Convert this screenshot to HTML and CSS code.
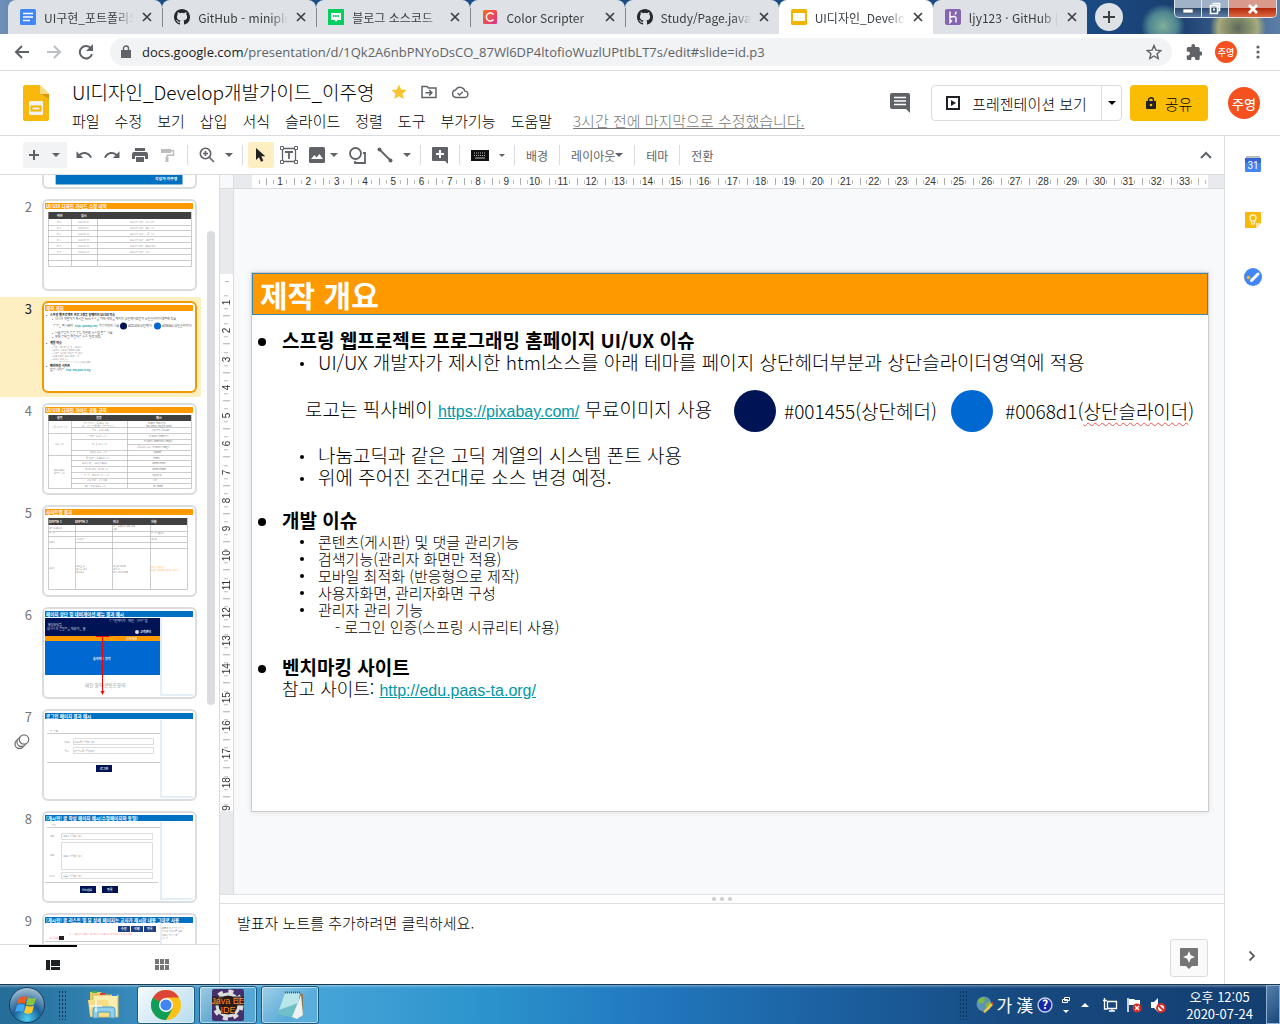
FILE: index.html
```html
<!DOCTYPE html>
<html lang="ko">
<head>
<meta charset="utf-8">
<title>UI디자인_Develop개발가이드_이주영 - Google Slides</title>
<link rel="stylesheet" href="styles.css">
</head>
<body>
<svg class="defs" aria-hidden="true">
  <symbol id="i-github" viewBox="0 0 16 16"><path fill="#24292e" d="M8 0C3.58 0 0 3.58 0 8c0 3.54 2.29 6.53 5.47 7.59.4.07.55-.17.55-.38v-1.49c-2.01.37-2.53-.49-2.69-.94-.09-.23-.48-.94-.82-1.13-.28-.15-.68-.52-.01-.53.63-.01 1.08.58 1.23.82.72 1.21 1.87.87 2.33.66.07-.52.28-.87.51-1.07-1.78-.2-3.64-.89-3.64-3.95 0-.87.31-1.59.82-2.15-.08-.2-.36-1.02.08-2.12 0 0 .67-.21 2.2.82a7.6 7.6 0 0 1 4 0c1.53-1.04 2.2-.82 2.2-.82.44 1.1.16 1.92.08 2.12.51.56.82 1.27.82 2.15 0 3.07-1.87 3.75-3.65 3.95.29.25.54.73.54 1.48v2.2c0 .21.15.46.55.38A8 8 0 0 0 16 8c0-4.42-3.58-8-8-8z"/></symbol>
  <symbol id="i-x" viewBox="0 0 10 10"><path d="M1 1l8 8M9 1l-8 8" stroke="#3c4043" stroke-width="1.7"/></symbol>
  <symbol id="i-caret" viewBox="0 0 8 4"><path d="M0 0h8l-4 4z" fill="currentColor"/></symbol>
  <symbol id="i-undo" viewBox="0 0 24 24"><path fill="#5f6368" d="M12.5 8c-2.65 0-5.05.99-6.9 2.6L2 7v9h9l-3.62-3.62c1.39-1.16 3.16-1.88 5.12-1.88 3.54 0 6.55 2.31 7.6 5.5l2.37-.78C21.08 11.03 17.15 8 12.5 8z"/></symbol>
</svg>

<header class="tabstrip">
  <nav class="tabs" aria-label="탭">
    <a class="tab" href="#"><svg width="16" height="16"><rect width="16" height="16" rx="1.5" fill="#4285f4"/><path d="M3 4.500h10M3 8h10M3 11.500h7" stroke="#fff" stroke-width="1.700"/></svg><span>UI구현_포트폴리오</span><svg class="x"><use href="#i-x"/></svg></a>
    <a class="tab sep" href="#"><svg width="16" height="16"><use href="#i-github"/></svg><span>GitHub - miniplugin</span><svg class="x"><use href="#i-x"/></svg></a>
    <a class="tab sep" href="#"><svg width="16" height="16"><rect width="16" height="16" fill="#04cf5c"/><path d="M3 4h10v7H9.500L8 13l-1.500-2H3z" fill="#fff"/><path d="M5 7h6" stroke="#04cf5c" stroke-width="2" stroke-dasharray="1.500 .7"/></svg><span>블로그 소스코드</span><svg class="x"><use href="#i-x"/></svg></a>
    <a class="tab sep" href="#"><svg width="16" height="16"><defs><linearGradient id="gc" x2="1" y2="1"><stop stop-color="#ff6b1a"/><stop offset="1" stop-color="#d8308c"/></linearGradient></defs><rect x="1" y="1" width="14" height="14" rx="1.500" fill="url(#gc)"/><path d="M11.500 5.500a4 4 0 1 0 0 5" fill="none" stroke="#fff" stroke-width="1.500"/></svg><span>Color Scripter</span><svg class="x"><use href="#i-x"/></svg></a>
    <a class="tab sep" href="#"><svg width="16" height="16"><use href="#i-github"/></svg><span>Study/Page.java a</span><svg class="x"><use href="#i-x"/></svg></a>
    <a class="tab active" href="#"><svg width="16" height="16"><rect width="16" height="16" rx="1.500" fill="#f4b400"/><path fill="#fff" d="M2 4h12v8H2z"/></svg><span>UI디자인_Develop</span><svg class="x"><use href="#i-x"/></svg></a>
    <a class="tab" href="#"><svg width="16" height="16"><rect width="16" height="16" rx="2" fill="#8565b0"/><path d="M5 2.500v6c3-1.500 6-1.500 6 .5v4.500M11 2.500q0 2-1 3M5 10.500v3l1.500-1.500z" fill="none" stroke="#fff" stroke-width="1.400"/></svg><span>ljy123 · GitHub |</span><svg class="x"><use href="#i-x"/></svg></a>
  </nav>
  <button class="newtab" aria-label="새 탭"><svg width="14" height="14"><path d="M7 1v12M1 7h12" stroke="#3c4043" stroke-width="2"/></svg></button>
  <div class="winbtns">
    <button aria-label="최소화"><svg width="12" height="16"><rect x="1" y="8" width="10" height="4" fill="#fff" stroke="#555" stroke-width=".7"/></svg></button>
    <button aria-label="이전 크기로"><svg width="14" height="16"><path d="M4.500 2.500h7v7h-2M2.500 4.500h7v8h-7z" fill="none" stroke="#fff" stroke-width="1.600"/><path d="M5 7.500h2v2H5z" fill="#fff"/></svg></button>
    <button class="wclose" aria-label="닫기"><svg width="12" height="16"><path d="M2 4l8 8M10 4l-8 8" stroke="#fff" stroke-width="2.800"/></svg></button>
  </div>
</header>

<div class="addressbar">
  <button aria-label="뒤로"><svg width="16" height="16"><path d="M15 8H2M8 2L2 8l6 6" fill="none" stroke="#5f6368" stroke-width="2"/></svg></button>
  <button aria-label="앞으로"><svg width="16" height="16"><path d="M1 8h13M8 2l6 6-6 6" fill="none" stroke="#bdc1c6" stroke-width="2"/></svg></button>
  <button aria-label="새로고침"><svg width="16" height="16"><path d="M13 4.500A6.200 6.200 0 1 0 14 10" fill="none" stroke="#5f6368" stroke-width="2"/><path d="M15 0v7H8z" fill="#5f6368"/></svg></button>
  <div class="omnibox">
    <svg width="10" height="14"><path d="M0 5h10v8H0z" fill="#5f6368"/><path d="M2.500 5V3.500a2.500 2.500 0 0 1 5 0V5" fill="none" stroke="#5f6368" stroke-width="1.400"/></svg>
    <span class="url"><b>docs.google.com</b>/presentation/d/1Qk2A6nbPNYoDsCO_87Wl6DP4ltofioWuzlUPtIbLT7s/edit#slide=id.p3</span>
    <svg width="16" height="16"><path d="M8 1.500l1.900 4.600 4.900.4-3.700 3.200 1.100 4.800L8 12l-4.200 2.500 1.100-4.800L1.200 6.500l4.900-.4z" fill="none" stroke="#5f6368" stroke-width="1.400"/></svg>
  </div>
  <svg class="puzzle" width="16" height="16" viewBox="1 1 21 21"><path fill="#5f6368" d="M20.500 11H19V7a2 2 0 0 0-2-2h-4V3.500a2.500 2.500 0 0 0-5 0V5H4a2 2 0 0 0-2 2v3.800h1.500a2.700 2.700 0 0 1 0 5.400H2V20c0 1.100.9 2 2 2h3.800v-1.500a2.700 2.700 0 0 1 5.400 0V22H17a2 2 0 0 0 2-2v-4h1.500a2.500 2.500 0 0 0 0-5z"/></svg>
  <span class="avatar small">주영</span>
  <svg class="dots" width="4" height="16"><circle cx="2" cy="3" r="1.600"/><circle cx="2" cy="8" r="1.600"/><circle cx="2" cy="13" r="1.600"/></svg>
</div>

<div class="dochead">
  <svg class="logo" width="26" height="36"><path d="M2 0h15l9 9v25q0 2-2 2H2q-2 0-2-2V2Q0 0 2 0z" fill="#f8b90c"/><path d="M17 0l9 9h-9z" fill="#fbdc85"/><path d="M18 9h8v5z" fill="#d99a0a"/><path d="M6 17q0-1 1-1h12q1 0 1 1v12q0 1-1 1H7q-1 0-1-1z" fill="#f1f1f1"/><path d="M8.500 21.500h9v4h-9z" fill="none" stroke="#f4b400" stroke-width="2"/></svg>
  <div class="headmain">
    <div class="titlerow">
      <h1>UI디자인_Develop개발가이드_이주영</h1>
      <svg width="16" height="16"><path fill="#fbc32c" d="M8 .5l2.200 5.100 5.500.5-4.200 3.600 1.300 5.400L8 12.200l-4.800 2.900 1.300-5.400L.3 6.100l5.500-.5z"/></svg>
      <svg width="16" height="16"><path d="M1 2.500h5l1.500 1.500H15v9.500H1z" fill="none" stroke="#5f6368" stroke-width="1.500"/><path d="M4.500 8.700h6M8.200 6l2.700 2.700-2.700 2.700" fill="none" stroke="#5f6368" stroke-width="1.500"/></svg>
      <svg width="18" height="16"><path d="M5 13.500h8.500a3.200 3.200 0 0 0 .4-6.400A5 5 0 0 0 4.600 6 3.800 3.800 0 0 0 5 13.500z" fill="none" stroke="#5f6368" stroke-width="1.400"/><path d="M6.500 9l2 2 3.300-3.300" fill="none" stroke="#5f6368" stroke-width="1.300"/></svg>
    </div>
    <nav class="menus">
      <button>파일</button><button>수정</button><button>보기</button><button>삽입</button><button>서식</button><button>슬라이드</button><button>정렬</button><button>도구</button><button>부가기능</button><button>도움말</button>
      <a href="#">3시간 전에 마지막으로 수정했습니다.</a>
    </nav>
  </div>
  <button class="comment" aria-label="댓글"><svg width="20" height="20"><path d="M2 0h16q2 0 2 2v18l-4-4H2q-2 0-2-2V2q0-2 2-2z" fill="#5f6368"/><path d="M4 4.500h12M4 8h12M4 11.500h12" stroke="#fff" stroke-width="1.600"/></svg></button>
  <div class="present">
    <button><svg width="14" height="14"><path d="M1 1h12v12H1z" fill="none" stroke="#202124" stroke-width="2"/><path d="M5 4l5 3-5 3z" fill="#202124"/></svg>프레젠테이션 보기</button>
    <button class="more" aria-label="프레젠테이션 옵션"><svg width="8" height="4"><use href="#i-caret"/></svg></button>
  </div>
  <button class="share"><svg width="10" height="12"><path d="M0 4h10v7q0 1-1 1H1q-1 0-1-1z" fill="#202124"/><path d="M2.500 4.500V3.300a2.500 2.500 0 0 1 5 0v1.200" fill="none" stroke="#202124" stroke-width="1.400"/><circle cx="5" cy="8" r="1.300" fill="#fbbc04"/></svg>공유</button>
  <span class="avatar">주영</span>
</div>

<div class="app">
  <div class="work">
    <div class="toolbar">
      <div class="newslide"><button aria-label="새 슬라이드"><svg width="12" height="12"><path d="M6 1v10M1 6h10" stroke="#5f6368" stroke-width="2"/></svg></button><button aria-label="레이아웃 선택"><svg width="8" height="4"><use href="#i-caret"/></svg></button></div>
      <button class="ic" aria-label="실행취소"><svg width="18" height="18"><use href="#i-undo"/></svg></button>
      <button class="ic flip" aria-label="재실행"><svg width="18" height="18"><use href="#i-undo"/></svg></button>
      <button class="ic" aria-label="인쇄"><svg width="16" height="14"><path d="M3 0h10v3H3zM2 4h12q2 0 2 2v5h-3V8H3v3H0V6q0-2 2-2zM4 9h8v5H4z" fill="#5f6368"/></svg></button>
      <button class="ic" aria-label="서식 복사"><svg width="14" height="14"><path d="M0 1h10v4H0z" fill="#bdbdbd"/><path d="M10 2.700h2.500v4.600H6v2" fill="none" stroke="#bdbdbd" stroke-width="1.400"/><path d="M4.500 9h3v5h-3z" fill="#bdbdbd"/></svg></button>
      <i class="bar"></i>
      <button class="ic wide" aria-label="확대/축소"><svg width="16" height="16"><circle cx="6.500" cy="6.500" r="5.200" fill="none" stroke="#5f6368" stroke-width="1.600"/><path d="M10.500 10.500l4.500 4.500M4 6.500h5M6.500 4v5" stroke="#5f6368" stroke-width="1.600"/></svg><svg width="8" height="4"><use href="#i-caret"/></svg></button>
      <i class="bar"></i>
      <button class="ic picked" aria-label="선택"><svg width="12" height="16"><path d="M1 1v12l3-2.800 2 4.600 2.300-1-2-4.500h4z" fill="#202124"/></svg></button>
      <button class="ic" aria-label="텍스트 상자"><svg width="18" height="18"><path d="M2.500 2.500h13v13h-13z" fill="none" stroke="#5f6368" stroke-width="1.300"/><path d="M5 6h8M9 6v7" stroke="#5f6368" stroke-width="1.800"/><path d="M.5.500h3v3h-3zM14.500.500h3v3h-3zM.5 14.500h3v3h-3zM14.500 14.500h3v3h-3z" fill="#fff" stroke="#5f6368"/></svg></button>
      <button class="ic pair" aria-label="이미지"><svg width="16" height="16"><rect width="16" height="16" rx="1.500" fill="#5f6368"/><path d="M2 12l3.500-4 2 2.500L10.500 7l3.500 5z" fill="#fff"/></svg><svg width="8" height="4"><use href="#i-caret"/></svg></button>
      <button class="ic" aria-label="도형"><svg width="17" height="17"><circle cx="6.500" cy="6.500" r="5.500" fill="none" stroke="#5f6368" stroke-width="1.800"/><path d="M14 6h2v10H6v-2" fill="none" stroke="#5f6368" stroke-width="1.800"/></svg></button>
      <button class="ic wide" aria-label="선"><svg width="16" height="16"><path d="M2.500 2.500l11 11" stroke="#5f6368" stroke-width="1.800"/><circle cx="2.500" cy="2.500" r="2" fill="#5f6368"/><circle cx="13.500" cy="13.500" r="2" fill="#5f6368"/></svg><svg width="8" height="4"><use href="#i-caret"/></svg></button>
      <i class="bar"></i>
      <button class="ic" aria-label="댓글 추가"><svg width="16" height="17"><path d="M1 0h14q1 0 1 1v16l-3-3H1q-1 0-1-1V1q0-1 1-1z" fill="#5f6368"/><path d="M8 3v8M4 7h8" stroke="#fff" stroke-width="2"/></svg></button>
      <i class="bar"></i>
      <button class="ic wide" aria-label="입력 도구"><svg width="18" height="12"><rect y="1" width="18" height="11" fill="#111"/><path d="M3 4h12M3 6.500h12" stroke="#bbb" stroke-dasharray="1 1"/><path d="M4 9h10" stroke="#bbb"/></svg><svg width="6" height="3"><use href="#i-caret"/></svg></button>
      <i class="bar"></i>
      <button class="tx">배경</button><i class="bar"></i>
      <button class="tx">레이아웃<svg width="8" height="4"><use href="#i-caret"/></svg></button><i class="bar"></i>
      <button class="tx">테마</button><i class="bar"></i>
      <button class="tx">전환</button>
      <button class="ic collapse" aria-label="메뉴 숨기기"><svg width="12" height="8"><path d="M1 7l5-5 5 5" fill="none" stroke="#5f6368" stroke-width="2"/></svg></button>
    </div>

    <div class="panes">
      <aside class="film">
        <div class="filmview">
        <ol>
          <li class="cut"><span></span><svg viewBox="0 74 151 14"><path fill="#0070c0" d="M1 70h148v15H1z"/><text x="117" y="80" class="t w b">작성자 이주영</text></svg></li>
          <li><span>2</span><svg viewBox="0 0 151 88"><path class="or" d="M1 2h148v6H1z"/><text class="t w b" x="2" y="7">UI/UIX 디자인 가이드 수정 내역</text><path fill="#404040" d="M4 11h143v7H4z"/><text class="s w b" x="13" y="16">버전</text><text class="s w b" x="37" y="16">일시</text><path class="g" d="M4.500 11v54.500h143V11M4 24.500h143M4 29.500h143M4 35.500h143M4 41.500h143M4 47.500h143M4 53.500h143M4 59.500h143M27.500 18v47M53.500 18v47"/>
            <g class="m"><text x="13" y="22">v1.0</text><text x="34" y="22">2020-07-01</text><text x="86" y="22">UI디자인 가이드 최초 작성</text><text x="13" y="28">v1.1</text><text x="34" y="28">2020-07-03</text><text x="86" y="28">UI디자인 가이드 헤더 추가</text><text x="13" y="34">v1.2</text><text x="34" y="34">2020-07-10</text><text x="86" y="34">UI디자인 가이드 공통 추가</text><text x="13" y="40">v1.3</text><text x="34" y="40">2020-07-14</text><text x="86" y="40">UI디자인 가이드 사이트맵</text><text x="13" y="46">v1.4</text><text x="34" y="46">2020-07-20</text><text x="86" y="46">UI디자인 가이드 페이지 예시</text><text x="13" y="52">v1.5</text><text x="34" y="52">2020-07-24</text><text x="86" y="52">UI디자인 가이드 최종</text></g></svg></li>
          <li class="sel"><span>3</span><svg viewBox="0 0 151 88"><path class="or" d="M1 2h148v6H1z"/><text class="t w b" x="2" y="7">제작 개요</text>
            <g class="s b"><text x="2" y="13">•</text><text x="6" y="13">스프링 웹프로젝트 프로그래밍 홈페이지 UI/UX 이슈</text><text x="2" y="41">•</text><text x="6" y="41">개발 이슈</text><text x="2" y="64">•</text><text x="6" y="64">벤치마킹 사이트</text></g>
            <g class="s"><text x="8" y="17">•</text><text x="11" y="17">UI/UX 개발자가 제시한 html소스를 아래 테마를 페이지 상단헤더부분과 상단슬라이더영역에 적용</text><text x="9" y="24">로고는 픽사베이</text><text x="55" y="24">무료이미지 사용</text><text x="84" y="24">#001455(상단헤더)</text><text x="118" y="24">#0068d1(상단슬라이더)</text><text x="8" y="31">•</text><text x="11" y="31">나눔고딕과 같은 고딕 계열의 시스템 폰트 사용</text><text x="8" y="35">•</text><text x="11" y="35">위에 주어진 조건대로 소스 변경 예정.</text><text x="6" y="68">참고 사이트:</text></g>
            <g class="m"><text x="8" y="45">• 콘텐츠(게시판) 및 댓글 관리기능</text><text x="8" y="48">• 검색기능(관리자 화면만 적용)</text><text x="8" y="51">• 모바일 최적화 (반응형으로 제작)</text><text x="8" y="54">• 사용자화면, 관리자화면 구성</text><text x="8" y="57">• 관리자 관리 기능</text><text x="14" y="60">- 로그인 인증(스프링 시큐리티 사용)</text></g>
            <g class="m link b"><text x="31" y="24">https://pixabay.com/</text><text x="22" y="68">http://edu.paas-ta.org/</text></g><circle cx="79.500" cy="23" r="3.500" fill="#001455"/><circle cx="113.500" cy="23" r="3.500" fill="#0068d1"/></svg></li>
          <li><span>4</span><svg viewBox="0 0 151 88"><path class="or" d="M1 2h148v6H1z"/><text class="t w b" x="2" y="7">UI/UIX 디자인 가이드 공통 규칙</text><path fill="#404040" d="M4 10h143v6H4z"/><g class="s w b"><text x="13" y="14">항목</text><text x="52" y="14">설명</text><text x="112" y="14">예시</text></g><path class="g" d="M4.500 10v73.500h143V10M27 22.500h120M4 28.500h143M27 34.500h120M83 39.500h64M27 45.500h120M4 50.500h143M27 55.500h120M27 61.500h120M27 67.500h120M27 73.500h120M27 78.500h120M27.500 16v67M83.500 16v67"/>
            <g class="m"><text x="8" y="23">공통 디자인 규칙</text><text x="11" y="40">폴더 규칙</text><text x="10" y="66">데이터베이스</text><text x="10" y="69">파일명 규칙</text><text x="40" y="19">소스명시시 공통(헤더,푸터)</text><text x="38" y="22">UI는 기본폰트를 맑은고딕으로 표시</text><text x="48" y="26">컬러는 2가지 사용</text><text x="43" y="32">프로젝트 폴더명 규칙</text><text x="48" y="40">css, js 폴더 규칙</text><text x="46" y="48">이미지 폴더 - 규칙</text><text x="42" y="54">웹 사이트 - 홈페이지 규칙</text><text x="38" y="59">관리자 메뉴 - 관리자 페이지</text><text x="41" y="65">게시판 관리 - 게시판 규칙</text><text x="40" y="71">로그인 - 회원가입 기능 규칙</text><text x="43" y="76">기타 컨텐츠 규칙 적용</text><text x="41" y="82">DB 스키마 테이블 규칙</text><text x="104" y="19">header, footer.jsp</text><text x="102" y="22">font-family: Malgun Gothic</text><text x="108" y="26">#001455, #0068d1</text><text x="105" y="32">resources/home/css</text><text x="100" y="37">resources/admin/dist/images</text><text x="92" y="43">공통이미지 폴더 : resources/images</text><text x="109" y="48">/upload/</text><text x="109" y="54">/home</text><text x="108" y="59">/admin/home</text><text x="108" y="65">/admin/board</text><text x="108" y="71">/login.jsp</text><text x="109" y="76">/etc</text><text x="109" y="82">tbl_board</text></g></svg></li>
          <li><span>5</span><svg viewBox="0 0 151 88"><path class="or" d="M1 2h148v6H1z"/><text class="t w b" x="2" y="7">사이트맵 결과</text><path fill="#404040" d="M4 11h139v7H4z"/><g class="s w b"><text x="5" y="16">DEPTH 1</text><text x="31" y="16">DEPTH 2</text><text x="69" y="16">비고</text><text x="107" y="16">현황</text></g><path class="g" d="M4.500 11v71.500h139V11M4 24.500h139M4 29.500h139M31 35.500h112M4 41.500h139M31.500 18v64M68.500 18v64M106.500 18v64"/><g class="m"><text x="5" y="22">메인(홈페이지)</text><text x="5" y="27">로그인</text><text x="5" y="36">사용자</text><text x="5" y="62">관리자</text><text x="32" y="33">공지사항</text><text x="32" y="60">관리자 홈</text><text x="32" y="63">게시물 관리</text><text x="32" y="66">회원관리</text><text x="69" y="20">기존 홈페이지 내용 사용</text><text x="69" y="23">적용</text><text x="69" y="60">게시판 CRUD</text><text x="69" y="63">검색 기능</text><text x="69" y="66">회원 관리 CRUD</text><text x="107" y="27">로그인 페이지</text><text x="107" y="33">게시판</text></g><g class="m orange"><text x="107" y="61">관리자 페이지</text><text x="107" y="64">http://localhost:8080/ 관리자</text></g></svg></li>
          <li><span>6</span><svg viewBox="0 0 151 88"><path class="bl" d="M1 2h148v6H1z"/><text class="t w b" x="2" y="7">페이지 상단 및 네비게이션 메뉴 결과 예시</text><path fill="#001455" d="M1 9h115v18H1z"/><path class="or" d="M1 27h115v5H1z"/><path fill="#0068d1" d="M1 32h115v34H1z"/><path class="pale" d="M117 9v77h32"/><g class="s w"><text x="4" y="17">홍길동닷컴</text><text x="3" y="21">회사소개 콘텐츠를 제공하는 홈</text><text x="65" y="13">로그인페이지 - 메인 - 사이트맵</text></g><g class="s w b"><text x="96" y="24">고객센터</text><text x="82" y="31">공지사항</text><text x="49" y="51">슬라이드 영역</text></g><circle cx="93" cy="23" r="2" fill="#ddd"/><text class="t" x="41" y="78" fill="#777">메인 영역(콘텐츠영역)</text><path d="M52 27.500h13M58.500 27v57" stroke="red" /><path d="M56.500 82h4l-2 4z" fill="red"/></svg></li>
          <li><span>7<svg class="anim" width="16" height="16" viewBox="0 0 16 16"><g fill="#fff" stroke="#757575" stroke-width="1.300"><circle cx="5.500" cy="10" r="4.500"/><circle cx="7.500" cy="8" r="4.500"/><circle cx="10" cy="5.500" r="4.700"/></g></svg></span><svg viewBox="0 0 151 88"><path class="bl" d="M1 2h148v6H1z"/><text class="t w b" x="2" y="7">로그인 페이지 결과 예시</text><path class="pale" d="M117 9v77h32"/><path d="M3 22.500h113M3 51.500h113" class="g"/><path class="fld" d="M29.500 27.500h80v6h-80zM29.500 36.500h80v6h-80z"/><g class="m"><text x="6" y="21">로그인폼</text><text x="20" y="32">아이디</text><text x="21" y="41">암호</text><text x="30" y="32">아이디를 입력해주세요</text><text x="30" y="41">비밀번호를 입력하세요</text></g><path fill="#001455" d="M52 54h16v7H52z"/><text class="s w b" x="56" y="59">로그인</text></svg></li>
          <li><span>8</span><svg viewBox="0 0 151 88"><path class="bl" d="M1 2h148v6H1z"/><text class="t w b" x="2" y="7">[게시판] 글 작성 페이지 예시(수정페이지와 동일)</text><path class="pale" d="M117 9v77h32"/><path d="M3 14.500h113M1 69.500h113" class="g"/><path class="fld" d="M17.500 20.500h91v6h-91zM17.500 29.500h91v27h-91zM17.500 59.500h91v6h-91z"/><g class="m"><text x="6" y="13">글쓰기</text><text x="6" y="24">제목</text><text x="6" y="43">내용</text><text x="5" y="64">작성자</text><text x="19" y="24">제목을 입력해주세요</text><text x="19" y="44">내용을 입력해주세요</text><text x="19" y="64">이름을 입력해주세요</text></g><path fill="#001455" d="M36 73h16v7H36zM58 73h16v7H58z"/><text class="m w b" x="38" y="78">글쓰기완료</text><text class="s w b" x="63" y="78">목록</text></svg></li>
          <li><span>9</span><svg viewBox="0 0 151 88"><path class="bl" d="M1 2h148v6H1z"/><text class="t w b" x="2" y="7">[게시판] 글 리스트 및 뷰 상세 페이지는 교사가 제시한 내용 그대로 사용</text><path class="pale" d="M117 9v77h32"/><path d="M1 26.500h115" class="g"/><path fill="#1c3f86" d="M74 11h12v6H74zM87 11h12v6H87zM100 11h12v6h-12z"/><g class="s w b"><text x="77" y="15">수정</text><text x="90" y="15">삭제</text><text x="103" y="15">목록</text></g><g class="m"><text x="118" y="14">admin 권한으로 접속시</text><text x="118" y="17">수정과 삭제 버튼 사용</text><text x="118" y="21">사용자 권한은 목록</text><text x="118" y="24">가능함</text></g><g class="m red"><text x="25" y="20">※ 본 페이지의 내용은 게시판의 상세 페이지 예시이며 교사 제시 내용</text><text x="5" y="24">게시물제목</text></g><path d="M15 21h5v4h-5z" fill="#222"/></svg></li>
        </ol>
        <i class="scroll"></i>
        </div>
        <div class="viewtabs">
          <button class="cur" aria-label="필름 스트립 보기"><svg width="14" height="10"><path d="M0 0h4v10H0zM5 0h9v6H5zM5 7h9v3H5z" fill="#202124"/></svg></button>
          <button aria-label="바둑판 보기"><svg width="14" height="11"><path d="M0 0h4v5H0zM5 0h4v5H5zM10 0h4v5h-4zM0 6h4v5H0zM5 6h4v5H5zM10 6h4v5h-4z" fill="#757575"/></svg></button>
        </div>
      </aside>

      <main class="editor">
        <div class="hruler"><i class="corner"></i><i class="off"></i><div class="scale" id="hr"></div><i class="off end"></i></div>
        <div class="stage">
          <div class="vruler"><i class="off"></i><div class="scale" id="vr"></div><i class="off end"></i></div>
          <div class="canvas">
            <article class="slide">
              <h2>제작 개요</h2>
              <section>
                <h3>스프링 웹프로젝트 프로그래밍 홈페이지 UI/UX 이슈</h3>
                <p class="li">UI/UX 개발자가 제시한 html소스를 아래 테마를 페이지 상단헤더부분과 상단슬라이더영역에 적용</p>
                <div class="swatches">
                  <span>로고는 픽사베이 <a href="#">https://pixabay.com/</a> 무료이미지 사용</span>
                  <i class="navy"></i><span>#001455(상단헤더)</span>
                  <i class="blue"></i><span>#0068d1(<u>상단슬라이더</u>)</span>
                </div>
                <p class="li">나눔고딕과 같은 고딕 계열의 시스템 폰트 사용</p>
                <p class="li">위에 주어진 조건대로 소스 변경 예정.</p>
              </section>
              <section class="dev">
                <h3>개발 이슈</h3>
                <p class="li">콘텐츠(게시판) 및 댓글 관리기능</p>
                <p class="li">검색기능(관리자 화면만 적용)</p>
                <p class="li">모바일 최적화 (반응형으로 제작)</p>
                <p class="li">사용자화면, 관리자화면 구성</p>
                <p class="li">관리자 관리 기능</p>
                <p class="deep">- 로그인 인증(스프링 시큐리티 사용)</p>
              </section>
              <section>
                <h3>벤치마킹 사이트</h3>
                <p class="ref">참고 사이트: <a href="#">http://edu.paas-ta.org/</a></p>
              </section>
            </article>
          </div>
        </div>
        <div class="grip"><i></i><i></i><i></i></div>
        <div class="notes"><p>발표자 노트를 추가하려면 클릭하세요.</p>
          <button class="explore" aria-label="탐색"><svg width="18" height="21"><path d="M1 0h16q1 0 1 1v16q0 1-1 1h-5l-3 3-3-3H1q-1 0-1-1V1q0-1 1-1z" fill="#757575"/><path d="M9 3l1.700 4.300L15 9l-4.300 1.700L9 15l-1.700-4.300L3 9l4.300-1.700z" fill="#fff"/></svg></button>
        </div>
      </main>
    </div>
  </div>

  <aside class="side">
    <a href="#" aria-label="캘린더"><svg width="16" height="16"><path fill="#bdbdbd" d="M1 0h14v3H1z"/><path fill="#4285f4" d="M0 6h16v9q0 1-1 1H1q-1 0-1-1z"/><path fill="#3367d6" d="M0 2h16v5H0z"/><text x="8" y="13" text-anchor="middle" fill="#fff" font-size="10">31</text></svg></a>
    <a href="#" aria-label="Keep"><svg width="16" height="16"><path d="M1 0h14q1 0 1 1v10l-5 5H1q-1 0-1-1V1q0-1 1-1z" fill="#f9b80a"/><path d="M11 16v-5h5z" fill="#fde4a0"/><circle cx="8" cy="6" r="3" fill="none" stroke="#fff3cf" stroke-width="1.300"/><path d="M6.500 9v3h3V9" fill="none" stroke="#fff3cf" stroke-width="1.200"/></svg></a>
    <a href="#" aria-label="Tasks"><svg width="18" height="18"><circle cx="9" cy="9" r="9" fill="#4285f4"/><path d="M7.500 12.500l6.500-6.500" stroke="#fff" stroke-width="3" stroke-linecap="round"/><circle cx="4.500" cy="9.500" r="1.800" fill="#fbbc04"/></svg></a>
    <button aria-label="측면 패널 숨기기"><svg width="8" height="12"><path d="M1.500 1.500L6 6l-4.500 4.500" fill="none" stroke="#5f6368" stroke-width="1.800"/></svg></button>
  </aside>
</div>

<footer class="taskbar">
  <button class="orb" aria-label="시작"><svg width="38" height="38"><defs><radialGradient id="orb" cx=".5" cy=".9" r=".9"><stop stop-color="#4fd0f4"/><stop offset=".45" stop-color="#1c5f96"/><stop offset="1" stop-color="#a9c4d4"/></radialGradient></defs><circle cx="19" cy="19" r="17.500" fill="url(#orb)" stroke="#153c5c"/><path d="M11 12q4-3 8-1l-2 7q-4-2-8 0z" fill="#ee5a24"/><path d="M20 11.500q4 2 8 0l-2 7q-4 2-8 0z" fill="#8cc63f"/><path d="M9 19.500q4-2.500 8-.5l-2 7q-4-2-8 0z" fill="#3fa9f5"/><path d="M18 19.500q4 2 8 0l-2 7q-4 2.500-8 0z" fill="#fcc82c"/></svg></button>
  <i class="gripdots"></i>
  <button class="task plain" aria-label="탐색기"><svg width="34" height="34"><path d="M3 4h11l2 3h14v22H3z" fill="#e9c867"/><path d="M6 7h25v22H6z" fill="#fbeeae" stroke="#d8b757"/><path d="M5 3h5v2H5z" fill="#3cb54a"/><path d="M13 5h5v2h-5z" fill="#d6433a"/><path d="M25 6h5v2h-5z" fill="#3a84d6"/><path d="M1 12h20l2 16H3z" fill="#f6dd86"/><path d="M6 30v-8q0-3 3-3h16q3 0 3 3v8h-5v-6H11v6z" fill="#8fd0ee" stroke="#4b9cc6"/><path d="M9 12v12M3 18h12" stroke="#fff" stroke-width="1.500" opacity=".8"/></svg></button>
  <button class="task cur" aria-label="Chrome"><svg width="30" height="30" viewBox="-15 -15 30 30"><circle r="15" fill="#fbc116"/><path d="M-13-7.500A15 15 0 0 0 0 15L6.500 3.700 0 0z" fill="#0f9d58"/><path d="M-13-7.500A15 15 0 0 1 13-7.500H0v7.500z" fill="#db4437"/><circle r="7" fill="#fff"/><circle r="5.600" fill="#4285f4"/></svg></button>
  <button class="task" aria-label="Java EE IDE"><svg width="32" height="32"><rect width="32" height="32" rx="2" fill="#45306b"/><circle cx="16" cy="16" r="13.500" fill="none" stroke="#ddd" stroke-width="4" stroke-dasharray="5 5.600"/><circle cx="16" cy="16" r="11" fill="#222" stroke="#ddd" stroke-width="3"/><path d="M0 7.500h32v9H0zM9 16h14v9H9z" fill="#2a1a18" opacity=".8"/><g class="java"><text x="16" y="15">Java EE</text><text x="16" y="24">IDE</text></g></svg></button>
  <button class="task" aria-label="메모장"><svg width="32" height="30"><path d="M24 3l5 1v21l-5 3z" fill="#8a7a55"/><path d="M11 3h15l-4 25-19-4z" fill="#6fc0c8"/><path d="M11 3h15l-2 10-19 7z" fill="#b9e6ea"/><path d="M27 5l2 20-6 4-5-2z" fill="#eef1f1"/><path d="M11 2.500h15" stroke="#555" stroke-width="2" stroke-dasharray="1 1"/></svg></button>
  <div class="tray">
    <i class="gripdots"></i>
    <svg class="globe" width="18" height="18"><circle cx="8" cy="8" r="7.500" fill="#5c93b5"/><path d="M2 4q4-4 7-2l-1 5-5 1zM9 8l5-3 1 5-4 4z" fill="#7eb648"/><path d="M7 16l8-9 2 2-8 8z" fill="#f3c648"/><path d="M15 7l1-1.500 2 2-1 1.500z" fill="#d33"/></svg>
    <span class="ime">가</span><span class="ime">漢</span>
    <svg width="16" height="16"><circle cx="8" cy="8" r="7" fill="#1526a8" stroke="#c9d4ea" stroke-width="1.300"/><text x="8" y="12" text-anchor="middle" fill="#fff" font-size="12" font-weight="700">?</text></svg>
    <svg class="restore" width="10" height="20"><path d="M3.500 2.500h5v3h-5zM1.500 4.500h5v3h-5z" fill="#14406f" stroke="#fff"/><path d="M2 15h6l-3 3z" fill="#fff"/></svg>
    <svg width="8" height="4" class="up"><path d="M0 4h8L4 0z" fill="#fff"/></svg>
    <svg width="16" height="16"><path d="M5.500 4.500h9v7h-9zM7 14h6M10 11v3M2.500 1v6M1 3.500h4M2.500 7v5h3" fill="none" stroke="#fff" stroke-width="1.300"/></svg>
    <svg width="16" height="16"><path d="M2 1v14" stroke="#fff" stroke-width="1.500"/><path d="M3 2h5l1 1h5v6H9L8 8H3z" fill="#fff"/><circle cx="11" cy="11" r="4.500" fill="#d92b22"/><path d="M9 9l4 4M13 9l-4 4" stroke="#fff" stroke-width="1.300"/></svg>
    <svg width="16" height="16"><path d="M1 5h3l4-4v14l-4-4H1z" fill="#fff"/><circle cx="11" cy="11" r="4" fill="#fff" stroke="#d92b22" stroke-width="1.800"/><path d="M8.500 8.500l5 5" stroke="#d92b22" stroke-width="1.800"/></svg>
    <time>오후 12:05<br>2020-07-24</time>
    <button class="peek" aria-label="바탕 화면 보기"></button>
  </div>
</footer>
<script src="ruler.js"></script>
</body>
</html>
```
FILE: ruler.js
```js
function fillRuler(id, count) {
  const ruler = document.getElementById(id);
  for (let n = 1; n <= count; n++) {
    const cell = document.createElement('span');
    cell.textContent = n;
    ruler.appendChild(cell);
  }
}
fillRuler('hr', 33);
fillRuler('vr', 19);
```
FILE: styles.css
```css
* { box-sizing: border-box; }
body { margin: 0; min-height: 100vh; display: flex; flex-direction: column; background: #fff; color: #000; font-family: "Noto Sans CJK KR", "Noto Sans", sans-serif; font-size: 13px; font-weight: 300; }
button { font: inherit; color: inherit; background: none; border: 0; padding: 0; margin: 0; display: flex; align-items: center; justify-content: center; }
svg { display: block; flex: none; }
h1, h2, h3, p, ol { margin: 0; padding: 0; font-weight: 300; }
i { display: block; }
.defs { width: 0; height: 0; position: absolute; }

/* Browser tabs */
.tabstrip { height: 34px; display: flex; align-items: center; padding-left: 8px; background: radial-gradient(circle at 1163px 26px, #7fae9a 0, #4f8590 14px, transparent 22px), radial-gradient(circle at 1238px 28px, #5d6a58 0, #a5ab7c 20px, transparent 28px), linear-gradient(90deg, #6f8fb8 0, #1c4d85 10%, #1a4a82 85%, #1a3f70 92%, #5c7fa8 100%); }
.tabs { display: flex; flex: 0 1 1079px; height: 34px; min-width: 0; }
.tab { flex: 1 1 0; min-width: 0; display: flex; align-items: center; padding: 0 10px 0 12px; gap: 8px; background: #dee1e6; color: #3c4043; text-decoration: none; border-radius: 8px 8px 0 0; position: relative; }
.tab span { flex: 1; overflow: hidden; white-space: nowrap; font-size: 12px; font-weight: 400; mask-image: linear-gradient(90deg, #000 80%, transparent); }
.tab .x { width: 10px; height: 10px; }
.tab.sep::before { content: ""; position: absolute; left: 0; top: 8px; height: 19px; width: 1px; background: #80868b; }
.tab.active { background: #fff; }
.newtab { width: 28px; height: 28px; border-radius: 14px; background: #dee1e6; margin-left: 8px; }
.winbtns { display: flex; align-self: flex-start; margin: 0 3px 0 auto; height: 18px; border: 1px solid #dfe6ee; border-top: 0; border-radius: 0 0 5px 5px; overflow: hidden; background: linear-gradient(#9fb2c8 45%, #2b4a70 50%, #5d7da5); }
.winbtns button { width: 27px; border-right: 1px solid #dfe6ee; }
.winbtns .wclose { width: 47px; border: 0; background: linear-gradient(#d99a8c 45%, #b5290c 50%, #dd6a45); }

/* Address bar */
.addressbar { height: 37px; display: flex; align-items: center; padding: 0 20px 0 14px; border-bottom: 1px solid #dadce0; }
.addressbar > button { width: 16px; margin-right: 16px; }
.omnibox { flex: 1; height: 28px; border-radius: 14px; background: #f1f3f4; display: flex; align-items: center; padding: 0 10px 0 11px; gap: 11px; min-width: 0; margin-right: 14px; }
.url { flex: 1; color: #5f6368; font-family: "Open Sans", sans-serif; font-size: 13px; font-weight: 400; overflow: hidden; white-space: nowrap; }
.url b { font-weight: 400; color: #202124; }
.puzzle { margin-right: 13px; }
.avatar { width: 32px; height: 32px; border-radius: 50%; background: #f4511e; color: #fff; font-size: 13px; font-weight: 500; display: flex; align-items: center; justify-content: center; flex: none; }
.avatar.small { width: 22px; height: 22px; font-size: 9px; margin-right: 19px; }
.dots { fill: #5f6368; }

/* Document header */
.dochead { height: 65px; display: flex; align-items: center; padding: 0 20px 0 23px; border-bottom: 1px solid #dadce0; }
.headmain { flex: 1; padding: 6px 0 0 23px; min-width: 0; }
.titlerow { display: flex; align-items: center; height: 28px; }
.titlerow h1 { font-size: 19px; line-height: 28px; white-space: nowrap; margin-right: 17px; }
.titlerow svg { margin-right: 14px; }
.menus { display: flex; gap: 15px; height: 28px; align-items: center; font-size: 15px; white-space: nowrap; }
.menus a { color: #777; margin-left: 6px; }
.comment { margin-right: 21px; }
.present { display: flex; height: 36px; width: 191px; border: 1px solid #dadce0; border-radius: 4px; font-size: 15px; }
.present button { flex: 1; gap: 12px; white-space: nowrap; }
.present .more { flex: 0 0 20px; border-left: 1px solid #dadce0; }
.share { height: 36px; width: 78px; margin: 0 20px 0 8px; border-radius: 4px; background: #fbbc04; font-size: 15px; gap: 9px; }

/* App frame */
.app { flex: 1; display: flex; }
.work { flex: 1; min-width: 0; display: flex; flex-direction: column; }
.toolbar { height: 39px; border-bottom: 1px solid #dadce0; display: flex; align-items: center; padding: 0 12px 0 23px; color: #5f6368; }
.newslide { display: flex; width: 44px; height: 26px; background: #f1f3f4; border-radius: 2px; margin-right: 3px; }
.newslide button { flex: 1; }
.ic { width: 28px; height: 26px; }
.flip svg { transform: scaleX(-1); }
.wide { width: 44px; justify-content: space-between; padding: 0 4px 0 6px; }
.pair { width: 40px; gap: 5px; }
.picked { width: 26px; background: #feefc3; border-radius: 2px; margin-right: 1px; }
.bar { width: 1px; height: 20px; background: #dadce0; margin: 0 5px; }
.tx { font-size: 12px; font-weight: 400; padding: 0 6px; }
.collapse { margin-left: auto; width: 12px; }
.panes { flex: 1; display: flex; }

/* Filmstrip */
.film { width: 220px; flex: none; border-right: 1px solid #dadce0; display: flex; flex-direction: column; }
.filmview { flex: 1 1 0; min-height: 769px; display: flex; overflow: hidden; max-height: 769px; }
.film ol { width: 201px; list-style: none; display: flex; flex-direction: column; gap: 2px; }
.film li { display: flex; height: 100px; flex: none; padding: 4px 4px 4px 0; border-radius: 0 3px 3px 0; }
.film li > span { width: 42px; padding: 0 10px 0 0; text-align: right; font-size: 13px; line-height: 16px; color: #757575; font-weight: 400; }
.anim { margin: 9px -10px 0 14px; }
.film li > svg { width: 155px; height: 92px; border: 2px solid #dadce0; border-radius: 6px; background: #fff; }
.film li.cut { height: 18px; padding-top: 0; }
.film li.cut > svg { height: 14px; border-top: 0; border-radius: 0 0 6px 6px; }
.film li.sel { background: #feefc3; }
.film li.sel > svg { border-color: #f29900; }
.film li.sel > span { color: #202124; }
.scroll { width: 8px; height: 474px; margin: 56px 0 0 6px; border-radius: 4px; background: #dadce0; }
.or { fill: #ff9900; }
.bl { fill: #0070c0; }
.g { stroke: #aaa; stroke-width: 0.6; fill: none; }
.fld { stroke: #ddd; fill: #fff; }
.pale { stroke: #dce9f5; stroke-width: 1.5; fill: none; }
.t { font-size: 4.5px; }
.s { font-size: 3px; }
.m { font-size: 2.2px; fill: #333; }
.w { fill: #fff; }
.b { font-weight: 700; }
.link { fill: #0097a7; }
.orange { fill: #ff9900; }
.red { fill: #ff3333; }
.viewtabs { height: 40px; border-top: 1px solid #dadce0; display: flex; padding-left: 29px; gap: 61px; }
.viewtabs button { width: 48px; border: 2px solid transparent; border-width: 2px 0; }
.viewtabs .cur { border-top-color: #000; }

/* Editor */
.editor { flex: 1; min-width: 0; display: flex; flex-direction: column; }
.hruler { height: 14px; display: flex; border-bottom: 1px solid #dadce0; font-size: 10px; line-height: 13px; color: #333; font-weight: 400; font-family: "Liberation Sans", sans-serif; }
.hruler .corner { width: 14px; background: #f8f9fa; border-right: 1px solid #dadce0; }
.off { background: #e8eaed; width: 18px; }
.hruler .end { width: 16px; }
.scale { flex: 1; display: flex; }
#hr { padding: 0 9px 0 14px; background: linear-gradient(#bbb, #bbb) 7px 5px / 1px 4px no-repeat, linear-gradient(#bbb, #bbb) calc(100% - 2px) 5px / 1px 4px no-repeat, linear-gradient(#bbb, #bbb) calc(100% - 9px) 3px / 1px 7px no-repeat; }
#hr span { flex: 1 1 0; text-align: center; background: linear-gradient(#aaa, #aaa) 0 3px / 1px 7px no-repeat, linear-gradient(#bbb, #bbb) 25% 5px / 1px 4px no-repeat, linear-gradient(#bbb, #bbb) 75% 5px / 1px 4px no-repeat; }
.stage { display: flex; flex: 1; }
.vruler { width: 14px; flex: none; display: flex; flex-direction: column; border-right: 1px solid #dadce0; font-size: 10px; line-height: 13px; color: #333; font-weight: 400; font-family: "Liberation Sans", sans-serif; }
.vruler .off { width: auto; height: 85px; }
.vruler .end { height: 83px; }
#vr { flex-direction: column; padding-top: 14px; overflow: hidden; flex: 1 1 0; min-height: 0; background: linear-gradient(#bbb, #bbb) 5px 7px / 4px 1px no-repeat; }
#vr span { flex: 0 0 calc(100% / 18.5); writing-mode: vertical-rl; transform: rotate(180deg); text-align: center; background: linear-gradient(#aaa, #aaa) 3px 0 / 7px 1px no-repeat, linear-gradient(#bbb, #bbb) 5px 25% / 4px 1px no-repeat, linear-gradient(#bbb, #bbb) 5px 75% / 4px 1px no-repeat; }
.canvas { flex: 1; min-width: 0; background: #f8f9fb; padding: 83px 15px 82px 17px; }
.slide { height: 540px; background: #fff; border: 1px solid #ccc; box-shadow: 0 0 5px #ddd; font-size: 19px; line-height: 22px; white-space: nowrap; }
.slide h2 { height: 42px; background: #ff9900; border: 1px solid #3f86a8; color: #fff; font-size: 30px; line-height: 40px; font-weight: 700; padding-left: 7px; }
.slide section { padding: 0 0 0 30px; margin-bottom: 21px; }
.slide h2 + section { margin-top: 14px; }
.slide h3 { font-size: 19px; line-height: 22px; font-weight: 700; }
.slide h3::before { content: ""; display: inline-block; width: 8px; height: 8px; border-radius: 4px; background: #000; margin: 0 16px 2px -24px; }
.li { padding-left: 36px; }
.li::before { content: ""; display: inline-block; width: 4px; height: 4px; border-radius: 2px; background: #000; margin: 0 14px 4px -18px; }
.slide a { font-family: "Liberation Sans", sans-serif; font-size: 16px; color: #0097a7; font-weight: 400; }
.swatches { display: grid; grid-template-columns: 429px 50px 167px 54px auto; align-items: center; height: 71px; padding: 4px 0 0 23px; }
.swatches i { width: 42px; height: 42px; border-radius: 21px; }
.swatches .navy { background: #001455; }
.swatches .blue { background: #0068d1; }
.swatches u { text-decoration: underline wavy #e55 1px; text-underline-offset: 3px; }
.dev p { font-size: 15px; line-height: 17px; }
.dev h3 { margin-bottom: 2px; }
.deep { padding-left: 53px; }
.ref { font-size: 18px; line-height: 20px; }
.grip { height: 10px; border: 1px solid #e0e0e0; border-width: 1px 0; display: flex; gap: 4px; justify-content: center; align-items: center; }
.grip i { width: 4px; height: 4px; border-radius: 2px; background: #ccc; }
.notes { height: 80px; display: flex; justify-content: space-between; padding: 7px 16px 7px 17px; font-size: 15px; line-height: 24px; }
.explore { align-self: flex-end; width: 38px; height: 38px; border: 1px solid #dadce0; border-radius: 3px; background: #fafafa; }

/* Add-on rail */
.side { width: 56px; flex: none; border-left: 1px solid #dadce0; display: flex; flex-direction: column; align-items: center; padding: 20px 0; font-family: Roboto, sans-serif; font-weight: 400; }
.side a { height: 16px; margin-bottom: 40px; }
.side button { margin: auto 2px 2px 0; }

/* Taskbar */
.taskbar { height: 40px; display: flex; align-items: center; padding-left: 8px; border-top: 1px solid #1b3a52; background: linear-gradient(rgba(255,255,255,.35), transparent 3px), linear-gradient(90deg, #256c98 0, #3a8fc0 12%, #48a5d8 24%, #2b93cc 38%, #2279c0 50%, #1b5f9e 66%, #17497f 80%, #143e70 100%); color: #fff; }
.gripdots { width: 9px; height: 30px; background: radial-gradient(circle, #0e3450 1px, transparent 1px) 0 0 / 3px 4px; }
.orb { width: 38px; margin-right: 12px; }
.task { width: 58px; height: 38px; margin-right: 4px; border: 1px solid #1c5b80; border-radius: 3px; box-shadow: inset 0 0 0 1px rgba(255,255,255,.5); background: linear-gradient(135deg, rgba(255,255,255,.5), rgba(255,255,255,.1) 60%); }
.task.plain { border: 0; background: none; box-shadow: none; width: 66px; padding-left: 8px; }
.task.cur { background: linear-gradient(135deg, #f4fafd, #b8dcef); }
.java { font: 400 9px "Liberation Sans", sans-serif; fill: #ff8a1c; text-anchor: middle; }
.tray { margin-left: auto; display: flex; align-items: center; height: 39px; }
.tray > * { margin-right: 8px; }
.tray .globe { margin-right: 3px; }
.tray .ime { font-size: 17px; font-weight: 400; margin-right: 4px; }
.tray .up { margin: 0 13px 0 2px; }
.tray time { font-size: 13px; line-height: 17px; text-align: center; font-weight: 400; margin: 0 13px 0 12px; }
.peek { width: 14px; height: 39px; border: 1px solid #8fb0d0; background: linear-gradient(135deg, #5580ab, #1b467a); }
.tray .peek { margin: 0; }
```
